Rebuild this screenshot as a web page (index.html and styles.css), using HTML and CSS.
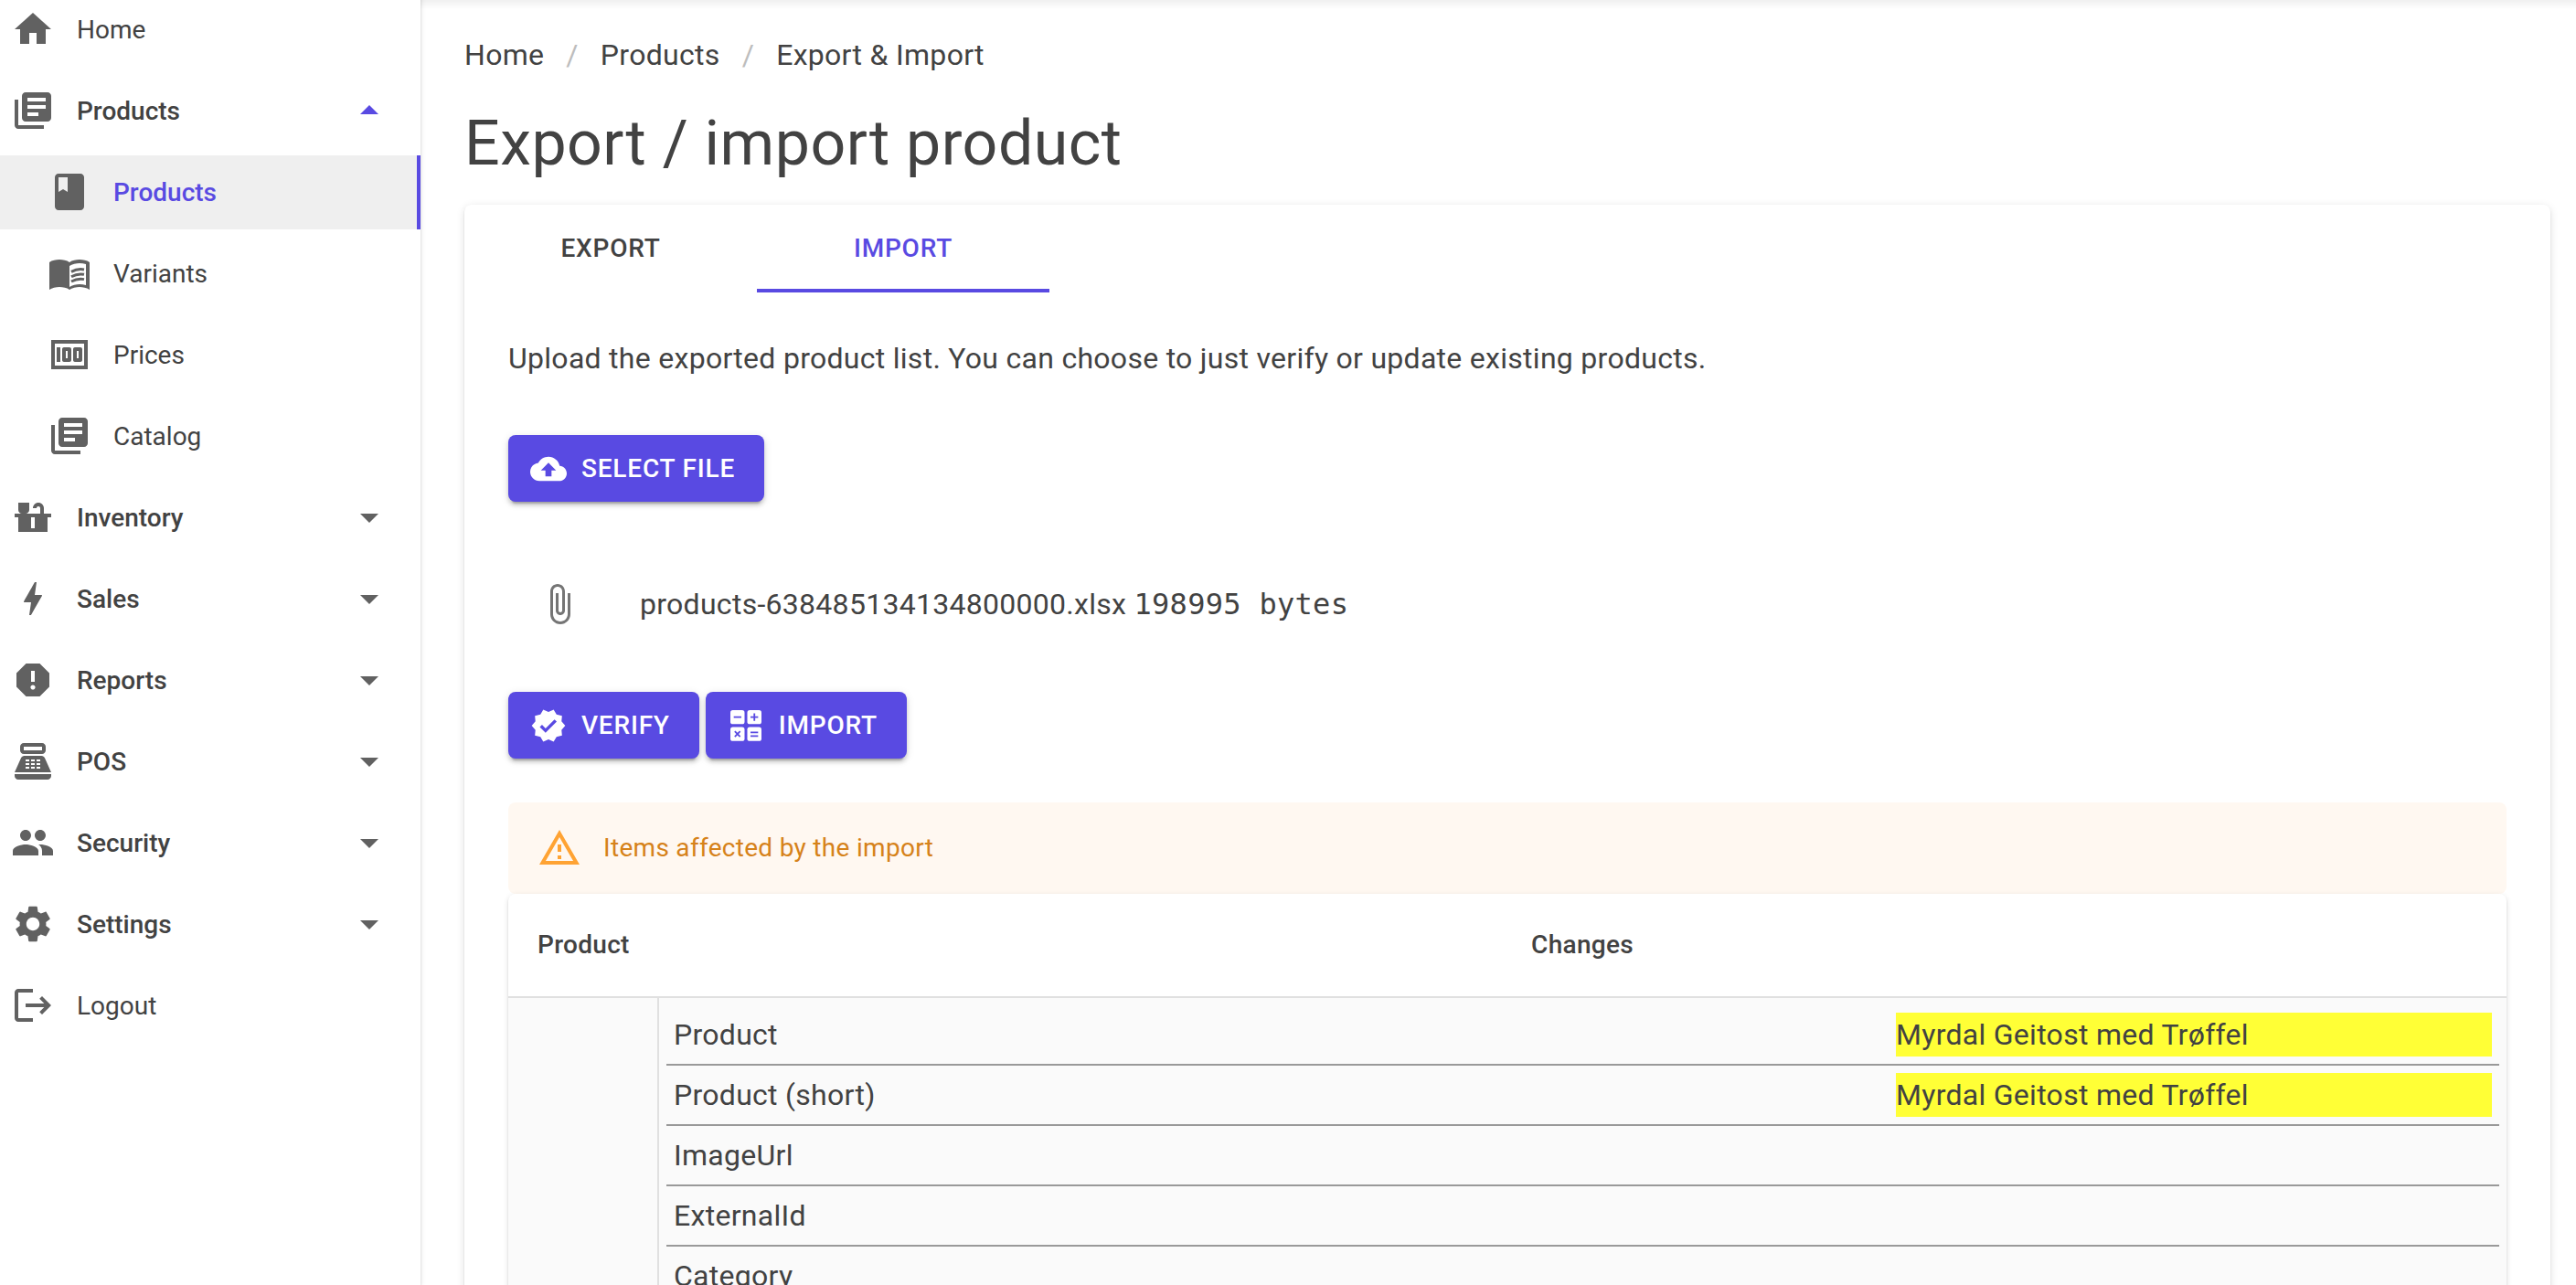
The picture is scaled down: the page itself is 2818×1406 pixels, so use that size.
FILE: index.html
```html
<!DOCTYPE html>
<html lang="en">
<head>
<meta charset="utf-8">
<title>Export / import product</title>
<link rel="stylesheet" href="styles.css">
</head>
<body>
<svg class="sprite" aria-hidden="true">
  <symbol id="library" viewBox="0 0 24 24"><path d="M4 6H2v14c0 1.1.9 2 2 2h14v-2H4V6zm16-4H8c-1.1 0-2 .9-2 2v12c0 1.1.9 2 2 2h12c1.1 0 2-.9 2-2V4c0-1.1-.9-2-2-2zm-1 9H9V9h10v2zm-4 4H9v-2h6v2zm4-8H9V5h10v2z"/></symbol>
  <symbol id="arrow" viewBox="0 0 24 24"><path d="M7 10l5 5 5-5z"/></symbol>
</svg>
<div class="layout">
  <nav class="sidebar">
    <a class="nav-item">
      <svg class="icon" viewBox="0 0 24 24"><path d="M10 20v-6h4v6h5v-8h3L12 3 2 12h3v8z"/></svg>
      <span class="label">Home</span>
    </a>
    <a class="nav-item group open">
      <svg class="icon"><use href="#library"/></svg>
      <span class="label">Products</span>
      <svg class="icon caret"><use href="#arrow"/></svg>
    </a>
    <a class="nav-item sub active">
      <svg class="icon" viewBox="0 0 24 24"><path d="M18 2H6c-1.1 0-2 .9-2 2v16c0 1.1.9 2 2 2h12c1.1 0 2-.9 2-2V4c0-1.1-.9-2-2-2zM6 4h5v8l-2.5-1.5L6 12V4z"/></svg>
      <span class="label">Products</span>
    </a>
    <a class="nav-item sub">
      <svg class="icon" viewBox="0 0 24 24"><path fill-rule="evenodd" d="M17.5 4.5c-1.95 0-4.05.4-5.5 1.5-1.45-1.1-3.55-1.5-5.5-1.5S2.45 4.9 1 6v15c1.45-1.05 3.55-1.5 5.5-1.5s4.05.4 5.5 1.5c1.35-.85 3.8-1.5 5.5-1.5 1.65 0 3.85.35 5.5 1.5V6c-1.45-1.1-3.55-1.5-5.5-1.5zM21 18.5c-1.1-.35-2.3-.5-3.5-.5-1.7 0-4.15.65-5.5 1.5V8c1.35-.85 3.8-1.5 5.5-1.5 1.2 0 2.4.15 3.5.5v11.5z"/><path fill="none" stroke="currentColor" stroke-width="1.5" d="M13 11.2C15.2 10 17.5 9.5 20 10M13 13.85c2.2-1.2 4.5-1.7 7-1.2M13 16.5c2.2-1.2 4.5-1.7 7-1.2"/></svg>
      <span class="label">Variants</span>
    </a>
    <a class="nav-item sub">
      <svg class="icon" viewBox="0 0 24 24"><path d="M5 8h2v8H5zM12 8H9c-.55 0-1 .45-1 1v6c0 .55.45 1 1 1h3c.55 0 1-.45 1-1V9c0-.55-.45-1-1-1zm-1 6h-1v-4h1v4zM18 8h-3c-.55 0-1 .45-1 1v6c0 .55.45 1 1 1h3c.55 0 1-.45 1-1V9c0-.55-.45-1-1-1zm-1 6h-1v-4h1v4z"/><path d="M2 4v16h20V4H2zm2 14V6h16v12H4z"/></svg>
      <span class="label">Prices</span>
    </a>
    <a class="nav-item sub">
      <svg class="icon"><use href="#library"/></svg>
      <span class="label">Catalog</span>
    </a>
    <a class="nav-item group">
      <svg class="icon" viewBox="0 0 24 24"><path d="M22 10h-4V7c0-1.66-1.34-3-3-3s-3 1.34-3 3h2c0-.55.45-1 1-1s1 .45 1 1v3H8c1.1 0 2-.9 2-2V4H4v4c0 1.1.9 2 2 2H2v2h2v8h16v-8h2v-2zm-9 8h-2v-6h2v6z"/></svg>
      <span class="label">Inventory</span>
      <svg class="icon caret"><use href="#arrow"/></svg>
    </a>
    <a class="nav-item group">
      <svg class="icon" viewBox="0 0 24 24"><path d="M11 21h-1l1-7H7.5c-.58 0-.57-.32-.38-.66C8.48 10.94 10.42 7.54 13 3h1l-1 7h3.5c.49 0 .56.33.47.51l-.07.15C12.96 17.55 11 21 11 21z"/></svg>
      <span class="label">Sales</span>
      <svg class="icon caret"><use href="#arrow"/></svg>
    </a>
    <a class="nav-item group">
      <svg class="icon" viewBox="0 0 24 24"><path d="M15.73 3H8.27L3 8.27v7.46L8.27 21h7.46L21 15.73V8.27L15.73 3zM12 17.3c-.72 0-1.3-.58-1.3-1.3s.58-1.3 1.3-1.3 1.3.58 1.3 1.3-.58 1.3-1.3 1.3zm1-4.3h-2V7h2v6z"/></svg>
      <span class="label">Reports</span>
      <svg class="icon caret"><use href="#arrow"/></svg>
    </a>
    <a class="nav-item group">
      <svg class="icon" viewBox="0 0 24 24"><path fill-rule="evenodd" d="M17 2H7c-1.1 0-2 .9-2 2v2c0 1.1.9 2 2 2h10c1.1 0 2-.9 2-2V4c0-1.1-.9-2-2-2zm0 4H7V4h10v2zM20 22H4c-1.1 0-2-.9-2-2v-1h20v1c0 1.1-.9 2-2 2zM18.53 10.19C18.21 9.47 17.49 9 16.7 9H7.3c-.79 0-1.51.47-1.83 1.19L2 18h20l-3.47-7.81zM8 11h2v1H8zM11 11h2v1h-2zM14 11h2v1h-2zM8 13h2v1H8zM11 13h2v1h-2zM14 13h2v1h-2zM8 15h2v1H8zM11 15h2v1h-2zM14 15h2v1h-2z"/></svg>
      <span class="label">POS</span>
      <svg class="icon caret"><use href="#arrow"/></svg>
    </a>
    <a class="nav-item group">
      <svg class="icon" viewBox="0 0 24 24"><path d="M16 11c1.66 0 2.99-1.34 2.99-3S17.66 5 16 5s-3 1.34-3 3 1.34 3 3 3zm-8 0c1.66 0 2.99-1.34 2.99-3S9.66 5 8 5 5 6.34 5 8s1.34 3 3 3zm0 2c-2.33 0-7 1.17-7 3.5V19h14v-2.5c0-2.33-4.67-3.5-7-3.5zm8 0c-.29 0-.62.02-.97.05 1.16.84 1.97 1.97 1.97 3.45V19h6v-2.5c0-2.33-4.67-3.5-7-3.5z"/></svg>
      <span class="label">Security</span>
      <svg class="icon caret"><use href="#arrow"/></svg>
    </a>
    <a class="nav-item group">
      <svg class="icon" viewBox="0 0 24 24"><path d="M19.14 12.94c.04-.3.06-.61.06-.94 0-.32-.02-.64-.07-.94l2.03-1.58c.18-.14.23-.41.12-.61l-1.92-3.32c-.12-.22-.37-.29-.59-.22l-2.39.96c-.5-.38-1.03-.7-1.62-.94l-.36-2.54c-.04-.24-.24-.41-.48-.41h-3.84c-.24 0-.43.17-.47.41l-.36 2.54c-.59.24-1.13.57-1.62.94l-2.39-.96c-.22-.08-.47 0-.59.22L2.74 8.87c-.12.21-.08.47.12.61l2.03 1.58c-.05.3-.09.63-.09.94s.02.64.07.94l-2.03 1.58c-.18.14-.23.41-.12.61l1.92 3.32c.12.22.37.29.59.22l2.39-.96c.5.38 1.03.7 1.62.94l.36 2.54c.05.24.24.41.48.41h3.84c.24 0 .44-.17.47-.41l.36-2.54c.59-.24 1.13-.56 1.62-.94l2.39.96c.22.08.47 0 .59-.22l1.92-3.32c.12-.22.07-.47-.12-.61l-2.01-1.58zM12 15.6c-1.98 0-3.6-1.62-3.6-3.6s1.62-3.6 3.6-3.6 3.6 1.62 3.6 3.6-1.62 3.6-3.6 3.6z"/></svg>
      <span class="label">Settings</span>
      <svg class="icon caret"><use href="#arrow"/></svg>
    </a>
    <a class="nav-item">
      <svg class="icon" viewBox="0 0 24 24"><path d="M12 3H4c-1.1 0-2 .9-2 2v14c0 1.1.9 2 2 2h8v-2H4V5h8zM17 7l-1.41 1.41L18.17 11H8v2h10.17l-2.58 2.58L17 17l5-5z"/></svg>
      <span class="label">Logout</span>
    </a>
  </nav>

  <main class="content">
    <div class="breadcrumbs">
      <a>Home</a><span class="sep">/</span><a>Products</a><span class="sep">/</span><a>Export &amp; Import</a>
    </div>
    <h1 class="title">Export / import product</h1>
    <section class="card">
      <div class="tabs">
        <div class="tab">Export</div>
        <div class="tab selected">Import</div>
      </div>
      <div class="panel">
        <p class="intro">Upload the exported product list. You can choose to just verify or update existing products.</p>
        <div class="actions">
          <button class="btn"><svg class="btn-icon" viewBox="0 0 24 24"><path d="M19.35 10.04C18.67 6.59 15.64 4 12 4 9.11 4 6.6 5.64 5.35 8.04 2.34 8.36 0 10.91 0 14c0 3.31 2.69 6 6 6h13c2.76 0 5-2.24 5-5 0-2.64-2.05-4.78-4.65-4.96zM14 13v4h-4v-4H7l5-5 5 5h-3z"/></svg>Select file</button>
        </div>
        <div class="file">
          <svg class="icon clip" viewBox="0 0 24 24"><path d="M16.5 6v11.5c0 2.21-1.79 4-4 4s-4-1.79-4-4V5c0-1.38 1.12-2.5 2.5-2.5s2.5 1.12 2.5 2.5v10.5c0 .55-.45 1-1 1s-1-.45-1-1V6H10v9.5c0 1.38 1.12 2.5 2.5 2.5s2.5-1.12 2.5-2.5V5c0-2.21-1.79-4-4-4S7 2.79 7 5v12.5c0 3.04 2.46 5.5 5.5 5.5s5.5-2.46 5.5-5.5V6h-1.5z"/></svg>
          <span>products-638485134134800000.xlsx <code>198995 bytes</code></span>
        </div>
        <div class="actions">
          <button class="btn"><svg class="btn-icon" viewBox="0 0 24 24"><path d="M23 12l-2.44-2.79.34-3.69-3.61-.82-1.89-3.2L12 2.96 8.6 1.5 6.71 4.69 3.1 5.5l.34 3.7L1 12l2.44 2.79-.34 3.7 3.61.82L8.6 22.5l3.4-1.47 3.4 1.46 1.89-3.19 3.61-.82-.34-3.69L23 12zm-12.91 4.72l-3.8-3.81 1.48-1.48 2.32 2.33 5.85-5.87 1.48 1.48-7.33 7.35z"/></svg>Verify</button>
          <button class="btn"><svg class="btn-icon" viewBox="0 0 24 24"><rect x="1.8" y="1.8" width="9.3" height="9.2" rx="1.6"/><rect x="12.9" y="1.8" width="9.3" height="9.2" rx="1.6"/><rect x="1.8" y="12.9" width="9.3" height="9.2" rx="1.6"/><rect x="12.9" y="12.9" width="9.3" height="9.2" rx="1.6"/><path fill="none" stroke="#594ae2" stroke-width="1.1" d="M4 6.4h5M15 6.4h5M17.55 3.9v5M4.7 15.7l3.5 3.6M8.2 15.7l-3.5 3.6M15 16.4h5M15 18.8h5"/></svg>Import</button>
        </div>
        <div class="alert">
          <svg class="icon" viewBox="0 0 24 24"><path d="M12 5.99L19.53 19H4.47L12 5.99M12 2L1 21h22L12 2zm1 14h-2v2h2v-2zm0-6h-2v4h2v-4z"/></svg>
          <span>Items affected by the import</span>
        </div>
        <div class="table">
          <div class="thead"><div class="col-product">Product</div><div class="col-changes">Changes</div></div>
          <div class="tbody">
            <div class="product-cell"></div>
            <div class="changes">
              <div class="change"><span>Product</span><mark>Myrdal Geitost med Trøffel</mark></div>
              <div class="change"><span>Product (short)</span><mark>Myrdal Geitost med Trøffel</mark></div>
              <div class="change"><span>ImageUrl</span></div>
              <div class="change"><span>ExternalId</span></div>
              <div class="change"><span>Category</span></div>
            </div>
          </div>
        </div>
      </div>
    </section>
  </main>
</div>
</body>
</html>
```
FILE: styles.css
```css
* { box-sizing: border-box; }

body {
  margin: 0;
  font-family: Roboto, "Liberation Sans", sans-serif;
  font-size: 32px;
  line-height: 48px;
  letter-spacing: .0088em;
  color: #424242;
  background: #fff;
}

.sprite { display: none; }

.layout {
  display: flex;
  height: 1406px;
  overflow: hidden;
}

.icon {
  flex: none;
  width: 48px;
  height: 48px;
  fill: currentColor;
  color: #616161;
}

/* Sidebar */
.sidebar {
  flex: none;
  display: flex;
  flex-direction: column;
  gap: 8px;
  width: 460px;
  margin-top: -8px;
  background: #fff;
  box-shadow: 0 4px 2px -2px rgba(0,0,0,.2), 0 2px 2px 0 rgba(0,0,0,.14), 0 2px 6px 0 rgba(0,0,0,.12);
  z-index: 1;
}

.nav-item {
  flex: none;
  display: flex;
  align-items: center;
  height: 81px;
  padding: 0 32px 0 12px;
  font-size: 28px;
  letter-spacing: 0;
}

.nav-item .icon { margin-bottom: 1px; }
.label { flex: 1; margin-left: 24px; }
.sub { padding-left: 52px; }
.group { font-weight: 500; }

.active {
  background: #efefef;
  border-right: 4px solid #594ae2;
  color: #594ae2;
  font-weight: 500;
}

.open .caret {
  color: #594ae2;
  transform: rotate(180deg);
}

/* Content */
.content {
  flex: 1;
  padding: 36px 28px 0 48px;
  background: linear-gradient(rgba(0,0,0,.06), transparent 10px);
}

.breadcrumbs { display: flex; letter-spacing: .00938em; }
.sep { padding: 0 24px; color: #bdbdbd; }

.title {
  margin: 31px 0 25px;
  font-size: 68px;
  line-height: 84px;
  font-weight: 400;
  letter-spacing: .00735em;
}

.card {
  height: 1400px;
  border-radius: 8px;
  background: #fff;
  box-shadow: 0 4px 2px -2px rgba(0,0,0,.2), 0 2px 2px 0 rgba(0,0,0,.14), 0 2px 10px 0 rgba(0,0,0,.12);
}

.tabs { display: flex; height: 96px; }

.tab {
  width: 320px;
  border-bottom: 4px solid transparent;
  font-size: 28px;
  font-weight: 500;
  line-height: 95px;
  letter-spacing: .02857em;
  text-align: center;
  text-transform: uppercase;
}

.selected { color: #594ae2; border-color: #594ae2; }

.panel { padding: 48px; }
.intro { margin: 0 0 60px; }
.actions { display: flex; gap: 7px; }

.btn {
  display: flex;
  align-items: center;
  height: 73px;
  padding: 0 32px 0 24px;
  border: 0;
  border-radius: 8px;
  background: #594ae2;
  color: #fff;
  font: 500 28px/49px Roboto, "Liberation Sans", sans-serif;
  letter-spacing: .02857em;
  text-transform: uppercase;
  box-shadow: 0 6px 2px -4px rgba(0,0,0,.2), 0 4px 4px 0 rgba(0,0,0,.14), 0 2px 10px 0 rgba(0,0,0,.12);
}

.btn-icon {
  width: 40px;
  height: 40px;
  margin-right: 16px;
  fill: #fff;
}

.file {
  display: flex;
  align-items: center;
  height: 112px;
  margin: 56px 0 40px;
  padding: 0 32px;
}

.clip { margin-right: 64px; color: #757575; }
code { font-family: "DejaVu Sans Mono", monospace; letter-spacing: .00938em; }

.alert {
  display: flex;
  align-items: center;
  gap: 24px;
  height: 100px;
  margin-top: 48px;
  padding: 0 32px;
  border-radius: 8px;
  background: #fff8f1;
  color: #d6821a;
  font-size: 28px;
  letter-spacing: .01071em;
}

.alert .icon { color: #ffa333; }

/* Changes table */
.table {
  height: 600px;
  border-radius: 8px;
  background: #fff;
  box-shadow: 0 4px 2px -2px rgba(0,0,0,.2), 0 2px 2px 0 rgba(0,0,0,.14), 0 2px 6px 0 rgba(0,0,0,.12);
}

.thead {
  display: flex;
  align-items: center;
  height: 114px;
  border-bottom: 2px solid #e0e0e0;
  font-size: 28px;
  font-weight: 500;
  letter-spacing: .01071em;
}

.col-product { width: 164px; padding-left: 32px; }
.col-changes { flex: 1; text-align: center; }

.tbody { display: flex; height: 486px; background: #fafafa; }
.product-cell { width: 165px; border-right: 2px solid #e0e0e0; }
.changes { flex: 1; padding: 8px; }

.change {
  display: flex;
  height: 66px;
  padding: 8px;
  border-bottom: 2px solid #999;
}

.change span { flex: 1; }
.change mark { width: 652px; background: #ffff36; color: inherit; }
```
